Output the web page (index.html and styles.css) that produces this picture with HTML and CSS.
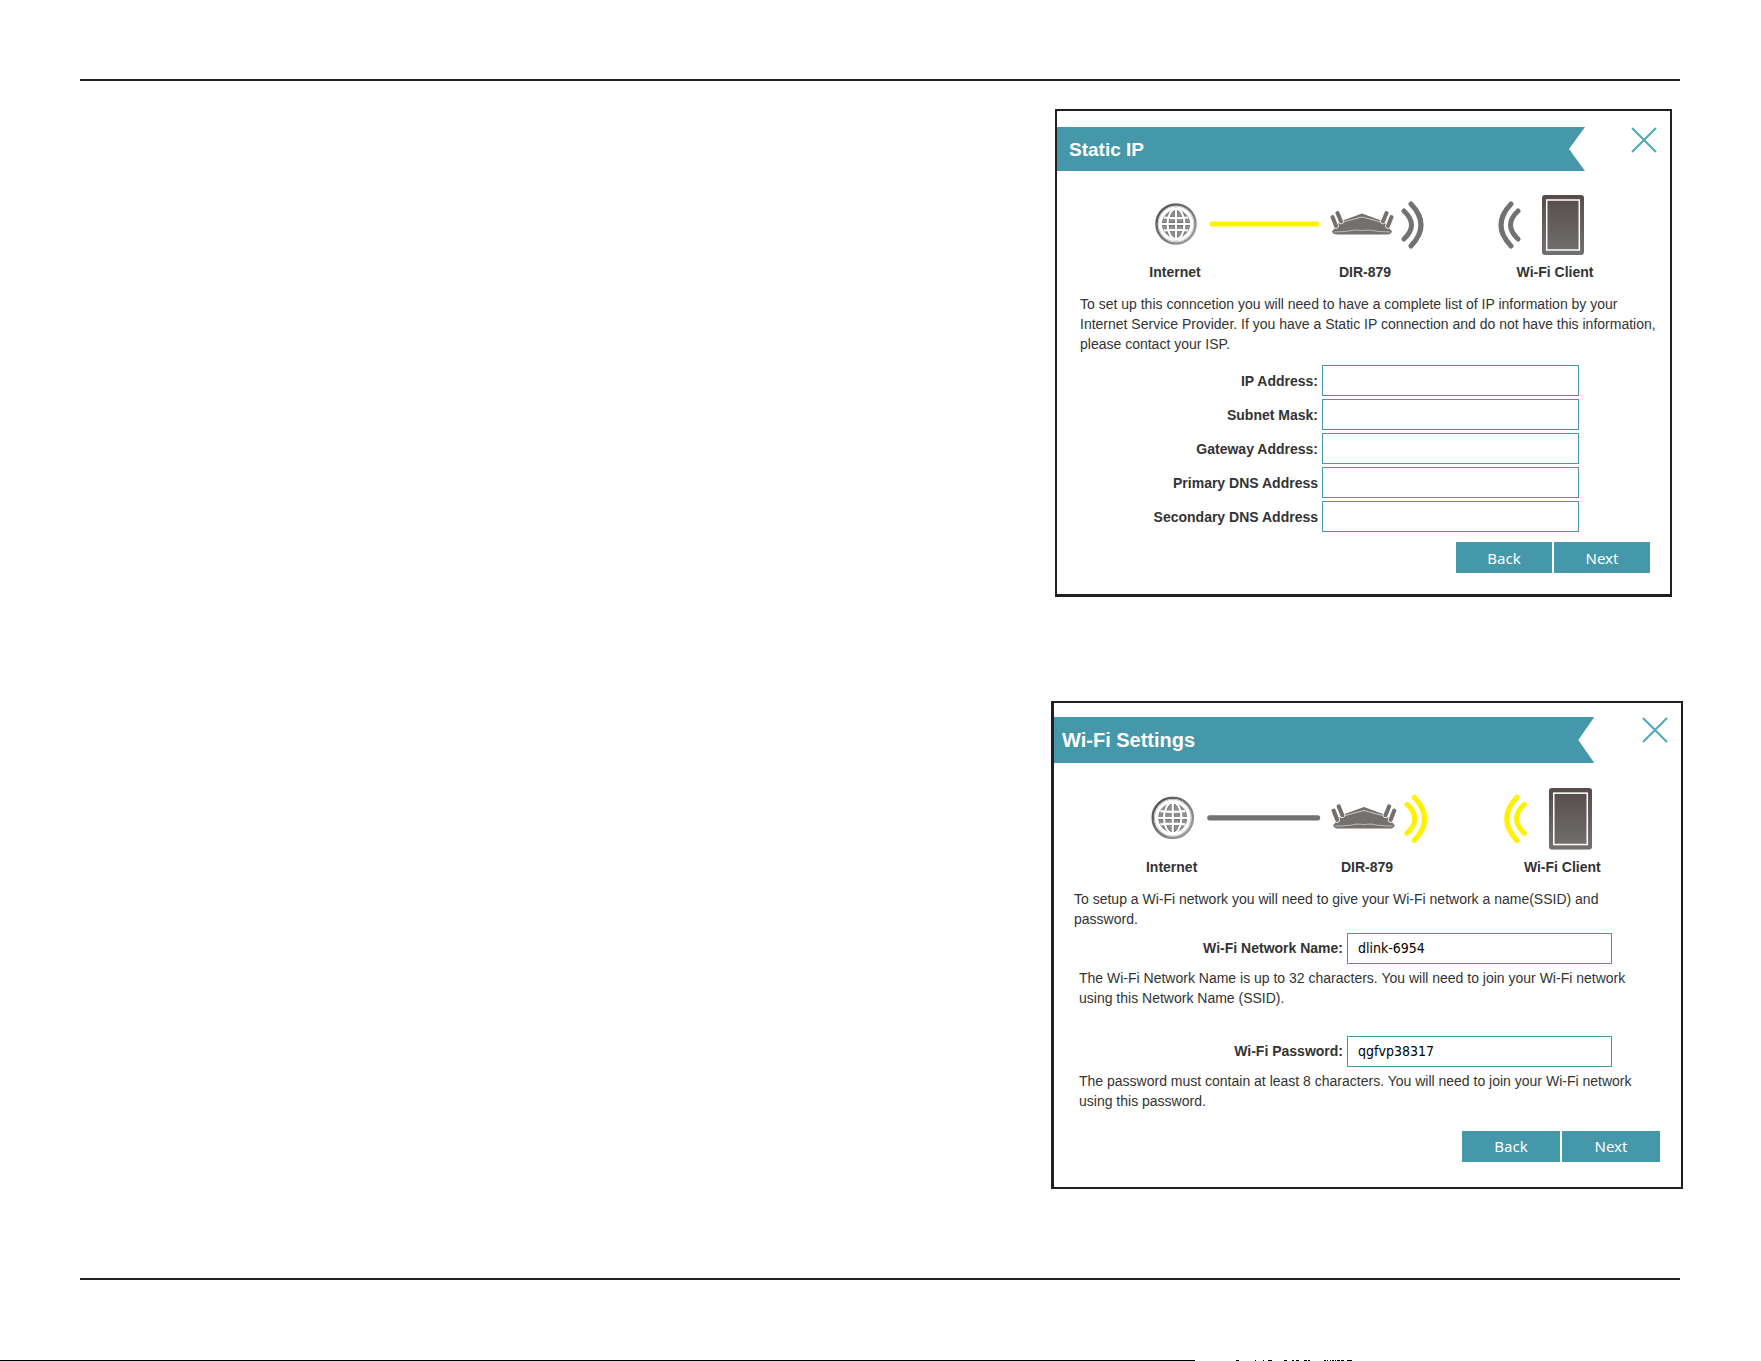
FILE: index.html
```html
<!DOCTYPE html>
<html lang="en">
<head>
<meta charset="utf-8">
<meta name="viewport" content="width=device-width, initial-scale=1">
<title>DIR-879 Setup</title>
<link rel="stylesheet" href="styles.css">
</head>
<body>
<svg class="defs" aria-hidden="true">
  <defs>
    <linearGradient id="screen" x1="0" y1="0" x2="0" y2="1">
      <stop offset="0" stop-color="#574b4b"/>
      <stop offset="1" stop-color="#72716f"/>
    </linearGradient>
    <linearGradient id="rim" x1="0" y1="0" x2="1" y2="1">
      <stop offset="0" stop-color="#4a4a4a"/>
      <stop offset="1" stop-color="#a5a5a5"/>
    </linearGradient>
    <symbol id="globe" viewBox="0 0 42 42">
      <circle cx="21" cy="21" r="19.500" fill="#fff" stroke="url(#rim)" stroke-width="2.500"/>
      <circle cx="21" cy="21" r="17.800" fill="none" stroke="#c4c4c4" stroke-width="1"/>
      <circle cx="21" cy="21" r="14.500" fill="#8f8f8f"/>
      <g fill="none" stroke="#5f5f5f" stroke-width="3.200">
        <ellipse cx="21" cy="21" rx="8.500" ry="15"/>
        <path d="M21 6v30M6 21h30"/>
      </g>
      <g fill="none" stroke="#fff" stroke-width="2.200">
        <circle cx="21" cy="21" r="15.500" stroke-width="2.600"/>
        <ellipse cx="21" cy="21" rx="8.500" ry="15"/>
        <path d="M21 6v30M6 21h30M9 14.500Q21 16 33 14.500M9 27.500Q21 26 33 27.500"/>
      </g>
    </symbol>
    <symbol id="router" viewBox="0 0 64 26">
      <path d="M2 21.500L10 11.500L32 3.500L54 11.500L62 21.500Q61 24.500 57 24.500H7Q3 24.500 2 21.500Z" fill="#73706e"/>
      <path d="M11 12.500L32 7L53 12.500" fill="none" stroke="#c9c8c6" stroke-width="1"/>
      <path d="M4 22Q16 22 25 20L32 20.500L39 20Q48 22 60 22" fill="none" stroke="#bbb9b7" stroke-width="1"/>
      <path d="M2.500 7L6 16M7.500 3L11 11.500M61.500 7L58 16M56.500 3L53 11.500" fill="none" stroke="#fff" stroke-width="5.500" stroke-linecap="round"/>
      <path d="M2.500 7L6 16M7.500 3L11 11.500M61.500 7L58 16M56.500 3L53 11.500" fill="none" stroke="#73706e" stroke-width="4" stroke-linecap="round"/>
    </symbol>
    <symbol id="waves" viewBox="0 0 24 48">
      <path d="M4 10Q19 24 4 38M11 3Q31 24 11 45" fill="none" stroke="currentColor" stroke-width="5" stroke-linecap="round"/>
    </symbol>
    <symbol id="tablet" viewBox="0 0 42 60">
      <rect width="42" height="60" rx="3" fill="url(#screen)"/>
      <rect x="4.700" y="5" width="32.600" height="50" fill="none" stroke="#fff" stroke-width="1.500"/>
    </symbol>
  </defs>
</svg>

<main class="page">
  <hr class="rule">

  <form class="card card-static">
    <header class="card-head">
      <h2 class="banner">Static IP</h2>
      <button class="close" type="button" aria-label="Close"><svg viewBox="0 0 26 26"><path d="M1 1L25 25M25 1L1 25"/></svg></button>
    </header>
    <div class="card-body">
      <svg class="diagram" viewBox="-1 0 570 60" aria-hidden="true">
        <use href="#globe" x="74" y="8" width="42" height="42"/>
        <path class="link active" d="M131 29H236"/>
        <use href="#router" x="249" y="15" width="64" height="26"/>
        <use class="signal" href="#waves" x="319" y="6" width="24" height="48"/>
        <use class="signal" href="#waves" x="-441" y="6" width="24" height="48" transform="scale(-1 1)"/>
        <use href="#tablet" x="461" y="0" width="42" height="60"/>
      </svg>
      <div class="captions"><span>Internet</span><span>DIR-879</span><span>Wi-Fi Client</span></div>
      <p class="intro">To set up this conncetion you will need to have a complete list of IP information by your<br>Internet Service Provider. If you have a Static IP connection and do not have this information,<br>please contact your ISP.</p>
      <div class="fields">
        <label for="ip">IP Address:</label><input id="ip" type="text">
        <label for="mask">Subnet Mask:</label><input id="mask" type="text">
        <label for="gateway">Gateway Address:</label><input id="gateway" type="text">
        <label for="dns1">Primary DNS Address</label><input id="dns1" type="text">
        <label for="dns2">Secondary DNS Address</label><input id="dns2" type="text">
      </div>
      <div class="actions"><button type="button">Back</button><button type="button">Next</button></div>
    </div>
  </form>

  <form class="card card-wifi">
    <header class="card-head">
      <h2 class="banner">Wi-Fi Settings</h2>
      <button class="close" type="button" aria-label="Close"><svg viewBox="0 0 26 26"><path d="M1 1L25 25M25 1L1 25"/></svg></button>
    </header>
    <div class="card-body">
      <svg class="diagram" viewBox="-1 0 570 60" aria-hidden="true">
        <use href="#globe" x="74" y="8" width="42" height="42"/>
        <path class="link" d="M131 29H236"/>
        <use href="#router" x="249" y="15" width="64" height="26"/>
        <use class="signal active" href="#waves" x="319" y="6" width="24" height="48"/>
        <use class="signal active" href="#waves" x="-441" y="6" width="24" height="48" transform="scale(-1 1)"/>
        <use href="#tablet" x="461" y="0" width="42" height="60"/>
      </svg>
      <div class="captions"><span>Internet</span><span>DIR-879</span><span>Wi-Fi Client</span></div>
      <p class="intro">To setup a Wi-Fi network you will need to give your Wi-Fi network a name(SSID) and<br>password.</p>
      <div class="fields">
        <label for="ssid">Wi-Fi Network Name:</label><input id="ssid" type="text" value="dlink-6954">
      </div>
      <p class="hint">The Wi-Fi Network Name is up to 32 characters. You will need to join your Wi-Fi network<br>using this Network Name (SSID).</p>
      <div class="fields second">
        <label for="pass">Wi-Fi Password:</label><input id="pass" type="text" value="qgfvp38317">
      </div>
      <p class="hint">The password must contain at least 8 characters. You will need to join your Wi-Fi network<br>using this password.</p>
      <div class="actions"><button type="button">Back</button><button type="button">Next</button></div>
    </div>
  </form>

  <hr class="rule">
</main>

<svg class="edge" preserveAspectRatio="none" viewBox="0 0 1761 1" aria-hidden="true">
  <path d="M0 0H1195V1H0zM1236 0h3v1h-3zM1255 0h1v1h-1zM1263 0h1v1h-1zM1268 0h4v1h-4zM1284 0h3v1h-3zM1292 0h2v1h-2zM1296 0h3v1h-3zM1304 0h3v1h-3zM1308 0h2v1h-2zM1324 0h2v1h-2zM1327 0h1v1h-1zM1330 0h1v1h-1zM1332 0h2v1h-2zM1335 0h1v1h-1zM1337 0h3v1h-3zM1341 0h3v1h-3zM1347 0h5v1h-5z"/>
</svg>
</body>
</html>
```

FILE: styles.css
```css
* {
  box-sizing: border-box;
}

body {
  margin: 0;
  min-height: 100vh;
  display: flex;
  flex-direction: column;
  background: #fff;
  color: #333;
  font-family: "Liberation Sans", Arial, sans-serif;
  font-size: 14px;
  line-height: 20px;
}

.defs {
  position: absolute;
  width: 0;
  height: 0;
}

.page {
  display: flex;
  flex-direction: column;
  padding: 79px 78px 40px 80px;
}

.rule {
  align-self: stretch;
  height: 2px;
  margin: 0 3px 0 0;
  border: 0;
  background: #231f20;
}

/* Dialog cards */
.card {
  align-self: flex-end;
  width: 100%;
  border: 2px solid #231f20;
}

.card-static {
  max-width: 617px;
  margin: 28px 11px 104px 0;
  padding: 16px 0 21px;
  border-bottom-width: 3px;
}

.card-wifi {
  max-width: 632px;
  margin-bottom: 89px;
  padding: 14px 0 25px;
  border-left-width: 3px;
}

.card-head {
  display: flex;
  justify-content: space-between;
  align-items: flex-start;
  padding-right: 13px;
}

.banner {
  flex: 0 0 88%;
  margin: 0;
  padding: 1px 0 0 12px;
  background: #4597aa;
  clip-path: polygon(0 0, 100% 0, calc(100% - 16px) 50%, 100% 100%, 0 100%);
  color: #fff;
  font-size: 19px;
  line-height: 43px;
}

.card-wifi .banner {
  padding-left: 8px;
  font-size: 20px;
  line-height: 45px;
}

.close {
  width: 26px;
  height: 26px;
  padding: 0;
  border: 0;
  background: none;
}

.close svg {
  display: block;
  fill: none;
  stroke: #4fa7ba;
  stroke-width: 2;
}

.card-body {
  padding: 24px 20px 0 23px;
}

.card-wifi .card-body {
  padding: 25px 21px 0 20px;
}

/* Connection diagram */
.diagram {
  display: block;
  width: 100%;
}

.link {
  fill: none;
  stroke: #727272;
  stroke-width: 5;
  stroke-linecap: round;
}

.signal {
  color: #727272;
}

.link.active {
  stroke: #fff200;
}

.signal.active {
  color: #fff200;
}

.captions {
  display: grid;
  grid-template-columns: repeat(3, 1fr);
  margin: 8px 0 13px;
  font-weight: bold;
  line-height: 18px;
  text-align: center;
}

.intro,
.hint {
  margin: 0;
}

@media (min-width: 720px) {
  .intro,
  .hint {
    white-space: nowrap;
  }
}

.hint {
  padding: 4px 0 0 5px;
}

/* Form rows */
.fields {
  display: grid;
  grid-template-columns: 1fr 257px;
  gap: 3px 4px;
  align-items: center;
  margin-top: 11px;
  padding-right: 71px;
}

.card-wifi .fields {
  grid-template-columns: 1fr 265px;
  margin-top: 4px;
  padding-right: 48px;
}

.card-wifi .second {
  margin-top: 28px;
}

.fields label {
  font-weight: bold;
  text-align: right;
}

.fields input {
  width: 100%;
  height: 31px;
  padding: 0 10px;
  border: 1px solid #4597aa;
  border-radius: 0;
  background: #fff;
  color: #000;
  font: 14px "DejaVu Sans Condensed", "DejaVu Sans", sans-serif;
}

.actions {
  display: flex;
  justify-content: flex-end;
  gap: 2px;
  margin-top: 10px;
}

.card-wifi .actions {
  margin-top: 20px;
}

.actions button {
  width: 96px;
  height: 31px;
  padding: 0;
  border: 0;
  background: #4597aa;
  color: #fff;
  font: 15px "Noto Sans", sans-serif;
}

.card-wifi .actions button {
  width: 98px;
}

/* Top edge of the next sheet */
.edge {
  display: block;
  width: 100%;
  height: 1px;
  margin-top: auto;
}
```
